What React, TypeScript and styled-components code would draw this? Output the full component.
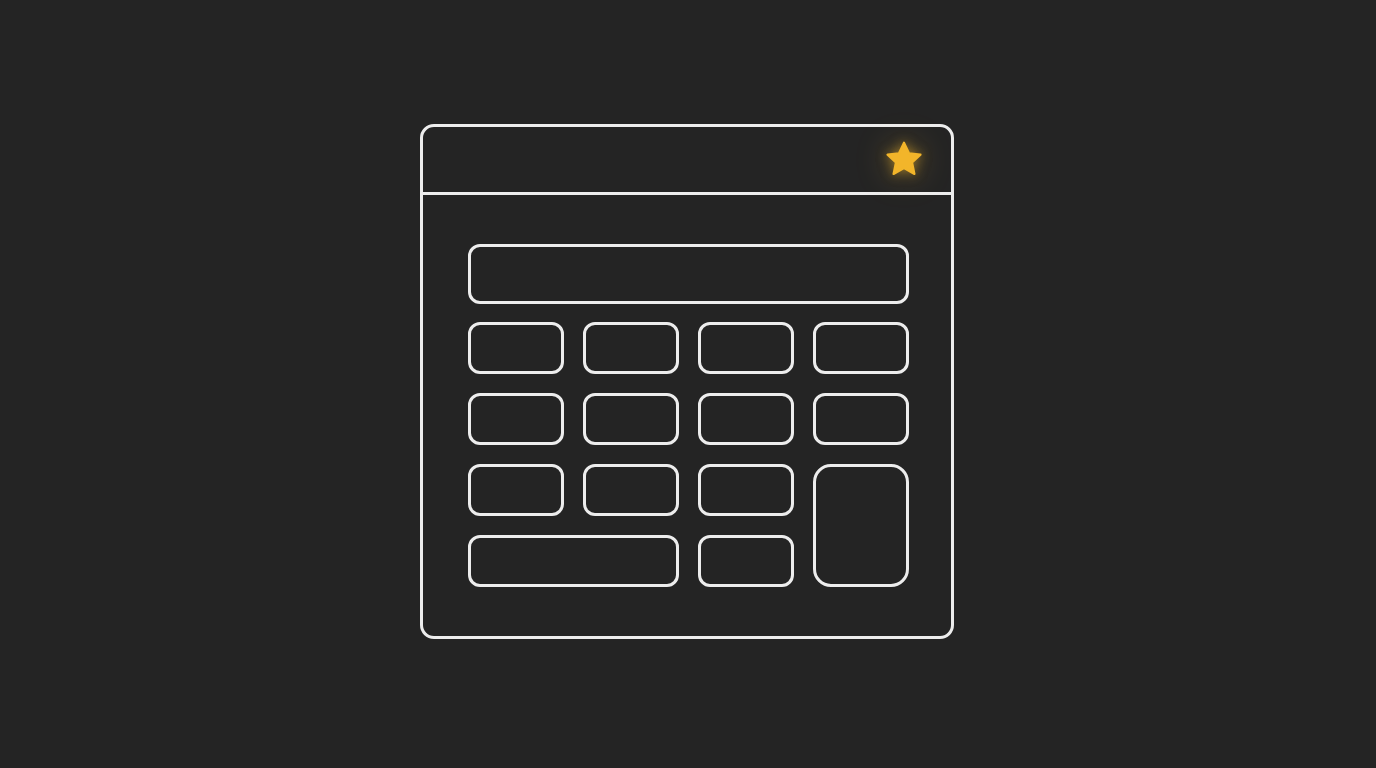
import React from "react";
import styled, { createGlobalStyle } from "styled-components";

const Global = createGlobalStyle`
  html, body { margin: 0; padding: 0; background: #242424; }
  body { font-family: "Inter", "Liberation Sans", sans-serif; }
`;

const Page = styled.div`
  width: 1376px;
  height: 768px;
  display: flex;
  align-items: flex-start;
  justify-content: center;
  padding-top: 124px;
  box-sizing: border-box;
  background: #242424;
`;

const Window = styled.div`
  width: 534px;
  box-sizing: border-box;
  border: 3px solid #ededed;
  border-radius: 14px;
  display: flex;
  flex-direction: column;
  margin-left: -2px;
`;

const Header = styled.div`
  height: 65px;
  border-bottom: 3px solid #ededed;
  display: flex;
  align-items: center;
  justify-content: flex-end;
  padding-right: 25px;
`;

const Body = styled.div`
  padding: 49px 42px 49px 45px;
  display: flex;
  flex-direction: column;
  gap: 18px;
`;

const Display = styled.div`
  height: 60px;
  box-sizing: border-box;
  border: 3px solid #ededed;
  border-radius: 12px;
`;

const Grid = styled.div`
  display: grid;
  grid-template-columns: repeat(4, 1fr);
  grid-template-rows: repeat(4, 52px);
  column-gap: 19px;
  row-gap: 19px;
`;

const Key = styled.div<{ $col?: number; $row?: number }>`
  box-sizing: border-box;
  border: 3px solid #ededed;
  border-radius: ${(p) => ((p.$row ?? 1) > 1 ? "18px" : "12px")};
  grid-column: span ${(p) => p.$col ?? 1};
  grid-row: span ${(p) => p.$row ?? 1};
`;

const StarIcon = styled.svg`
  width: 44px;
  height: 44px;
  filter: drop-shadow(0 0 6px rgba(243, 182, 43, 0.55)) drop-shadow(0 0 16px rgba(243, 182, 43, 0.3));
`;

const Star = () => (
  <StarIcon viewBox="0 0 24 24">
    <polygon
      points="12,2.6 14.8,8.4 21,9.1 16.4,13.3 17.7,19.6 12,16.4 6.3,19.6 7.6,13.3 3,9.1 9.2,8.4"
      fill="#f2b52a"
      stroke="#f2b52a"
      strokeWidth="1.2"
      strokeLinejoin="round"
    />
  </StarIcon>
);

export default function App() {
  return (
    <>
      <Global />
      <Page>
        <Window>
          <Header>
            <Star />
          </Header>
          <Body>
            <Display />
            <Grid>
              <Key />
              <Key />
              <Key />
              <Key />
              <Key />
              <Key />
              <Key />
              <Key />
              <Key />
              <Key />
              <Key />
              <Key $row={2} />
              <Key $col={2} />
              <Key />
            </Grid>
          </Body>
        </Window>
      </Page>
    </>
  );
}
